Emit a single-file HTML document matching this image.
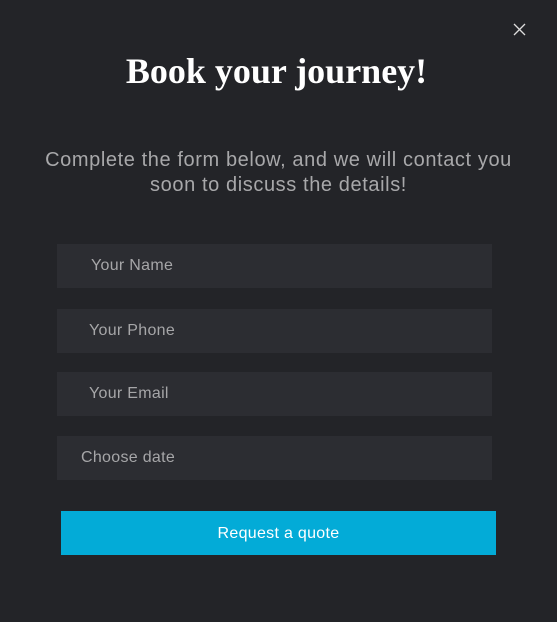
<!DOCTYPE html>
<html><head><style>
body{margin:0;width:557px;height:622px;background:#232428;position:relative;overflow:hidden;font-family:"Liberation Sans",sans-serif}
.x{position:absolute;left:513px;top:23px}
h1{position:absolute;top:48px;left:0;width:553px;margin:0;text-align:center;font-family:"Liberation Serif",serif;font-weight:bold;font-size:36px;color:#fff;line-height:46px}
p{position:absolute;top:148px;left:0;width:557px;margin:0;text-align:center;color:#a8a8aa;font-size:20px;line-height:25px;letter-spacing:0.6px}
.in{position:absolute;left:57px;width:435px;height:44px;background:#2c2d32;color:#a6a6a8;font-size:16px;line-height:43px;box-sizing:border-box;letter-spacing:0.3px}
.btn{position:absolute;left:61px;top:511px;width:435px;height:44px;background:#03abd7;color:#fff;font-size:16px;line-height:45px;text-align:center;letter-spacing:0.3px}
</style></head><body>
<svg class="x" width="13" height="13" viewBox="0 0 13 13"><path d="M1 1L12 12M12 1L1 12" stroke="#ddd" stroke-width="1.3"/></svg>
<h1>Book your journey!</h1>
<p>Complete the form below, and we will contact you<br>soon to discuss the details!</p>
<div class="in" style="top:244px;padding-left:34px">Your Name</div>
<div class="in" style="top:309px;padding-left:32px">Your Phone</div>
<div class="in" style="top:372px;padding-left:32px">Your Email</div>
<div class="in" style="top:436px;padding-left:24px">Choose date</div>
<div class="btn">Request a quote</div>
</body></html>
